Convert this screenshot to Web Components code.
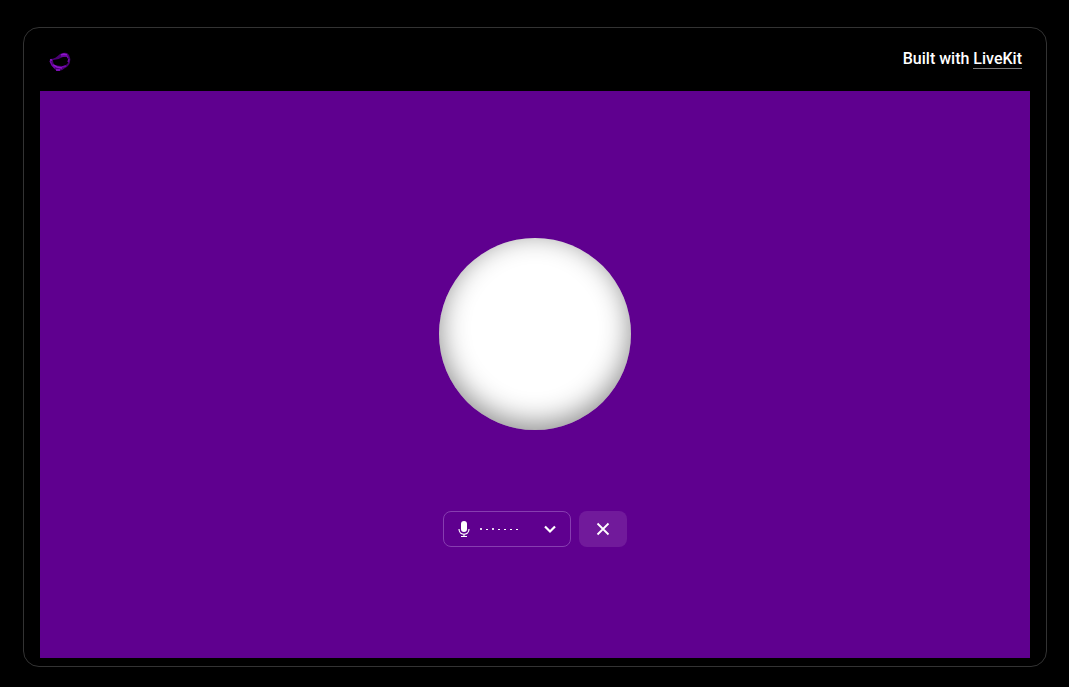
<!DOCTYPE html>
<html lang="en">
<head>
<meta charset="utf-8">
<meta name="viewport" content="width=device-width, initial-scale=1">
<title>Voice Assistant</title>
<style>
html,body{margin:0;height:100%;background:#000}
body{font-family:Roboto,"Liberation Sans",sans-serif;color:#fff}
</style>
</head>
<body>
<voice-app>
  <brand-header slot="header"></brand-header>
  <voice-orb></voice-orb>
  <control-bar></control-bar>
</voice-app>
<script>
class Base extends HTMLElement{
  constructor(){super();this.attachShadow({mode:'open'}).innerHTML=this.constructor.markup;}
}
class VoiceApp extends Base{
  static markup=`<style>
  :host{display:flex;box-sizing:border-box;min-height:100%;padding:27px 22px 20px 23px}
  .frame{flex:1;display:flex;flex-direction:column;box-sizing:border-box;max-width:1024px;margin:0 auto;border:1px solid #333;border-radius:16px;padding:0 16px 8px}
  main{flex:1;display:flex;flex-direction:column;align-items:center;justify-content:center;gap:81px;padding-top:36px;background:#5f008f}
  </style>
  <div class="frame"><slot name="header"></slot>
  <main><slot></slot></main></div>`;
}
class BrandHeader extends Base{
  static markup=`<style>
  :host{display:block}
  header{display:flex;justify-content:space-between;align-items:center;height:63px;padding:0 8px}
  svg{display:block;margin-top:6px}
  p{margin:0;padding-bottom:2px;font-size:16px;line-height:24px;font-weight:500}
  a{display:inline-block;line-height:18px;color:inherit;text-decoration:none;border-bottom:1px solid #777}
  </style>
  <header>
  <svg width="24" height="24" viewBox="0 0 24 24" role="img" aria-label="Logo">
   <path d="M2 8C6 8 9 6 12 3Q16 1 19 2L21 4Q23 8 22 11Q21 15 17 17Q14 20 11 20H9Q6 18 4 15L3 12Q1 10 2 8Z" fill="#4a0073"/>
   <path d="M5 9Q10 9 15 6Q18 5 19 6Q21 9 20 12Q18 15 15 15Q10 15 7 14Q5 13 5 9Z" fill="#000"/>
   <path d="M2 9L4 9M13 4L16 3L19 4M5 14L9 16L14 17M8 19L12 19" fill="none" stroke="#9014cc" stroke-width="1.5"/>
   <path d="M2 10L4 14L7 17M13 5L19 5L20 7M14 16L18 15M20 11L21 8" fill="none" stroke="#7008a8" stroke-width="1.4"/>
  </svg>
  <p>Built with <a href="#livekit">LiveKit</a></p>
  </header>`;
}
class VoiceOrb extends Base{
  static markup=`<style>
  :host{display:block;width:192px;height:192px;border-radius:50%;background:#fff;box-shadow:inset 0 -6px 28px rgba(0,0,0,.46)}
  </style>`;
}
class ControlBar extends Base{
  static markup=`<style>
  :host{display:flex;gap:8px;height:36px}
  button{appearance:none;margin:0;padding:0;border:0;background:none;color:#fff;display:flex;align-items:center;cursor:pointer}
  svg{display:block}
  .device{display:flex;box-sizing:border-box;width:128px;border:1px solid #873db0;border-radius:8px}
  .mic{flex:1;gap:8px;padding-left:12px}
  .bars{display:flex;gap:4px;align-items:center;height:2px}
  .bars i{width:2px;height:1px;background:#fff}
  .bars i.on{height:2px;background:#e3cfed}
  .menu{width:40px;justify-content:center}
  .close{width:48px;justify-content:center;border-radius:8px;background:#711a9b}
  </style>
  <div class="device">
   <button class="mic" type="button" aria-label="Toggle microphone">
    <svg width="16" height="18" viewBox="0 0 16 18"><rect x="5" y="1" width="6" height="11" rx="3" fill="#fff"/><path d="M3 9C3 16 13 16 13 9M8 14V16M5 16.5H11" fill="none" stroke="#fff" stroke-width="1.2"/></svg>
    <span class="bars"><i class="on"></i><i></i><i class="on"></i><i></i><i></i><i></i><i></i></span>
   </button>
   <button class="menu" type="button" aria-label="Choose microphone"><svg width="16" height="16" viewBox="0 0 16 16"><path d="M3 5.5L8 10.5L13 5.5" fill="none" stroke="#fff" stroke-width="2.2"/></svg></button>
  </div>
  <button class="close" type="button" aria-label="Disconnect"><svg width="16" height="16" viewBox="0 0 16 16"><path d="M2.5 2.5L13.5 13.5M13.5 2.5L2.5 13.5" fill="none" stroke="#fff" stroke-width="1.8"/></svg></button>`;
}
customElements.define('voice-app',VoiceApp);
customElements.define('brand-header',BrandHeader);
customElements.define('voice-orb',VoiceOrb);
customElements.define('control-bar',ControlBar);
</script>
</body>
</html>
